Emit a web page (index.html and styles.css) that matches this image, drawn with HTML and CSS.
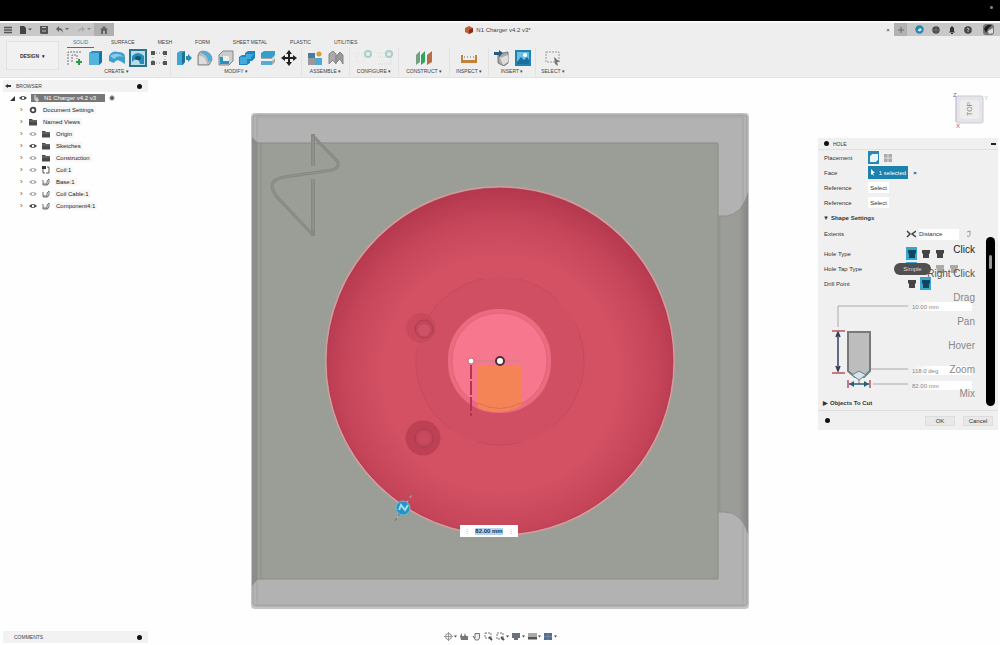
FILE: index.html
```html
<!DOCTYPE html>
<html lang="en">
<head>
<meta charset="utf-8">
<title>N1 Charger v4.2 v3*</title>
<link rel="stylesheet" href="styles.css">
</head>
<body>
<svg class="defs" width="0" height="0" aria-hidden="true">
  <defs>
    <symbol id="eye" viewBox="0 0 8 8"><path d="M0 4Q4 0 8 4Q4 8 0 4Z" fill="currentColor"/><circle cx="4" cy="4" r="1.2" fill="#fff"/></symbol>
    <symbol id="folder" viewBox="0 0 8 8"><path d="M0 1h3l1 1h4v5.500H0Z" fill="#4a4a4a"/><path d="M0 3h8" stroke="#999" stroke-width=".6"/></symbol>
    <symbol id="body" viewBox="0 0 8 8"><path d="M1 2v5h4.500l1.500-2V1L5 3v4M1 6h4" fill="#eee" stroke="#666" stroke-width=".9"/></symbol>
    <symbol id="gear" viewBox="0 0 8 8"><circle cx="4" cy="4" r="2.400" fill="none" stroke="#444" stroke-width="1.800"/></symbol>
    <symbol id="tap" viewBox="0 0 8 8"><path d="M0 0h8v3L7 4v4H1V4L0 3Z" fill="currentColor"/></symbol>
  </defs>
</svg>

<div class="screen-top"><span class="cam"></span></div>

<header class="app-head">
  <div class="titlebar">
    <div class="quick">
      <button aria-label="Data panel"><svg width="8" height="8" viewBox="0 0 8 8"><path d="M0 1.500h8M0 4h8M0 6.500h8" stroke="#555" stroke-width="1.400"/></svg></button>
      <button aria-label="File"><svg width="12" height="8" viewBox="0 0 12 8"><path d="M0 0h4l2 2v6H0Z" fill="#444"/><path d="M8 2.500h4l-2 2Z" fill="#555"/></svg></button>
      <button aria-label="Save"><svg width="8" height="8" viewBox="0 0 8 8"><path d="M0 0h8v8H1L0 7Z" fill="#555"/><path d="M2 1.500h4M2 5h4" stroke="#bbb"/></svg></button>
      <button aria-label="Undo"><svg width="14" height="8" viewBox="0 0 14 8"><path d="M0 3L3 0v2Q7 2 7 7Q6 4 3 4v2Z" fill="#666"/><path d="M9 2h4l-2 2Z" fill="#666"/></svg></button>
      <button aria-label="Redo"><svg width="14" height="8" viewBox="0 0 14 8"><path d="M7 3L4 0v2Q0 2 0 7Q1 4 4 4v2Z" fill="#aaa"/><path d="M9 2h4l-2 2Z" fill="#888"/></svg></button>
      <button class="home" aria-label="Home"><svg width="8" height="8" viewBox="0 0 8 8"><path d="M4 0L8 4H7v4H5V5H3v3H1V4H0Z" fill="#666"/></svg></button>
    </div>
    <div class="doc-title"><svg width="8" height="8" viewBox="0 0 8 8"><path d="M0 2L4 0L8 2V6L4 8L0 6Z" fill="#c75b35"/><path d="M4 4L8 2V6L4 8Z" fill="#733222"/></svg><span>N1 Charger v4.2 v3*</span></div>
    <button class="tab-close" aria-label="Close tab">×</button>
    <div class="account">
      <button class="new-tab" aria-label="New tab"><svg width="8" height="8" viewBox="0 0 8 8"><path d="M4 1v6M1 4h6" stroke="#666"/></svg></button>
      <button aria-label="Extensions"><svg width="9" height="9" viewBox="0 0 9 9"><circle cx="4.500" cy="4.500" r="4.200" fill="#2488b2"/><path d="M2.500 5.500L5 3l2 1.500-2 2Z" fill="#d5edf5"/></svg></button>
      <button aria-label="Job status"><svg width="8" height="8" viewBox="0 0 8 8"><circle cx="4" cy="4" r="3.700" fill="#4a4a4a"/><path d="M1 4h6M4 1v6" stroke="#888" stroke-width=".6"/></svg></button>
      <button aria-label="Notifications"><svg width="8" height="8" viewBox="0 0 8 8"><path d="M4 0L6 2v3l1 1.500H1L2 5V2ZM3 7h2v1H3Z" fill="#333"/></svg></button>
      <button aria-label="Help"><svg width="8" height="8" viewBox="0 0 8 8"><circle cx="4" cy="4" r="3.800" fill="#444"/><path d="M2.700 3Q4 1 5.200 3L4 4.500v1.500" fill="none" stroke="#ccc" stroke-width=".9"/></svg></button>
      <button class="avatar" aria-label="Profile"><svg width="11" height="11" viewBox="0 0 11 11"><rect width="11" height="11" rx="3" fill="#777"/><path d="M1 5Q3 0 9 1L5 5L3 9Z" fill="#222"/><path d="M5 7L10 4V9L6 10Z" fill="#ddd"/></svg></button>
    </div>
  </div>

  <div class="ribbon">
    <button class="workspace-btn">DESIGN <i>▾</i></button>
    <div class="ribbon-main">
      <nav class="tabs">
        <button class="active">SOLID</button><button>SURFACE</button><button>MESH</button><button>FORM</button><button>SHEET METAL</button><button>PLASTIC</button><button>UTILITIES</button>
      </nav>
      <div class="groups">
        <section class="group">
          <div class="tools">
            <button aria-label="Create sketch"><svg viewBox="0 0 16 16"><path d="M1 15V2h13M5 12V5h5v4" fill="none" stroke="#777" stroke-dasharray="2 1"/><path d="M12 9v6M9 12h6" stroke="#2c9a45" stroke-width="2"/></svg></button>
            <button aria-label="Extrude"><svg viewBox="0 0 16 16"><path d="M1 3L4 1H14V12L11 15H1Z" fill="#218fc1"/><path d="M1 3H11V15H1Z" fill="#52b4dd"/><path d="M11 3L14 1V12L11 15Z" fill="#1674a2"/></svg></button>
            <button aria-label="Revolve"><svg viewBox="0 0 16 16"><path d="M0 6Q3 0 9 2Q16 2 16 7V14L11 11Q7 9 5 13L0 11Z" fill="#3e9fcd"/><path d="M1 6Q8 1 15 7Q8 5 5 9Z" fill="#88cce8"/></svg></button>
            <button class="picked" aria-label="Hole"><svg viewBox="0 0 18 18"><path d="M1 1H17V17H1Z" fill="#b8dce8" stroke="#2b728d" stroke-width="2"/><path d="M3 7Q9 1 15 7V15H11Q10 9 5 11L3 13Z" fill="#258bb7"/><ellipse cx="9" cy="9" rx="3" ry="2" fill="#135872"/></svg></button>
            <button aria-label="Pattern"><svg viewBox="0 0 16 16"><path d="M2 3H14V13H2Z" fill="none" stroke="#888" stroke-dasharray="1 2"/><path d="M0 1h4v4H0ZM12 1h4v4h-4ZM0 11h4v4H0ZM12 11h4v4h-4Z" fill="#555"/></svg></button>
          </div>
          <button class="group-name">CREATE ▾</button>
        </section>
        <section class="group">
          <div class="tools">
            <button aria-label="Press pull"><svg viewBox="0 0 16 16"><path d="M1 3L4 1H9V12L7 15H1Z" fill="#3da8d5"/><path d="M6 3L9 1V12L6 15Z" fill="#216f93"/><path d="M10 6h2V4l4 4-4 4v-2h-2Z" fill="#2a8ab2"/></svg></button>
            <button aria-label="Fillet"><svg viewBox="0 0 16 16"><path d="M1 15V5Q2 1 6 1Q15 2 15 10L12 15Z" fill="#bbb" stroke="#888"/><path d="M6 1Q15 2 15 10L11 12Q11 5 4 3Z" fill="#4dafda"/><path d="M2 6Q8 5 10 14H2Z" fill="#ddd"/></svg></button>
            <button aria-label="Shell"><svg viewBox="0 0 16 16"><path d="M1 5L5 1H15V11L11 15H1Z" fill="#ccc" stroke="#888"/><path d="M2 7H11V14H2Z" fill="#2d91bd"/><path d="M5 6H11V11H5Z" fill="#eee"/></svg></button>
            <button aria-label="Combine"><svg viewBox="0 0 16 16"><path d="M0 7L3 5H6V3L9 1H16V8L13 11H11V13L8 15H0Z" fill="#1e86bd"/><path d="M1 7H7V4H15L12 7V9H8V14H1Z" fill="#43a9da"/></svg></button>
            <button aria-label="Split"><svg viewBox="0 0 16 16"><path d="M1 3L4 1H15V5L12 8H1Z" fill="#349fca"/><path d="M1 8H12L15 5V12L12 15H1Z" fill="#aaa"/><path d="M1 9H12L15 6V8L12 11H1Z" fill="#e5f3f9"/><path d="M1 11H12V15H1Z" fill="#55acd0"/></svg></button>
            <button aria-label="Move"><svg viewBox="0 0 16 16"><path d="M8 2V14M2 8H14" stroke="#222" stroke-width="2"/><path d="M8 0L11 4H5ZM8 16L5 12h6ZM0 8L4 5v6ZM16 8L12 11V5Z" fill="#222"/></svg></button>
          </div>
          <button class="group-name">MODIFY ▾</button>
        </section>
        <section class="group">
          <div class="tools">
            <button aria-label="New component"><svg viewBox="0 0 16 16"><path d="M1 3H8V8H1Z" fill="#477da4"/><path d="M1 8H8V15H1Z" fill="#999"/><path d="M8 8H15V15H8Z" fill="#4aaad8"/><circle cx="12" cy="4" r="2.500" fill="#d8a12d"/></svg></button>
            <button aria-label="Joint"><svg viewBox="0 0 16 16"><path d="M1 14V4L5 1L8 4V14L5 10Z" fill="#aaa" stroke="#888"/><path d="M8 6L12 2L15 5V14L12 9L8 13Z" fill="#999" stroke="#888"/></svg></button>
          </div>
          <button class="group-name">ASSEMBLE ▾</button>
        </section>
        <section class="group">
          <div class="tools faded">
            <button aria-label="Configuration"><svg viewBox="0 0 16 16"><path d="M1 3H8V12H1Z" fill="none" stroke="#ddd" stroke-dasharray="1 1"/><circle cx="12" cy="4" r="3" fill="none" stroke="#7cb9b5" stroke-width="2"/></svg></button>
            <button aria-label="Configuration table"><svg viewBox="0 0 16 16"><path d="M1 3H14V14H1M1 7H14" fill="none" stroke="#ccc" stroke-dasharray="1 1"/><circle cx="12" cy="4" r="3" fill="none" stroke="#7cb9b5" stroke-width="2"/></svg></button>
          </div>
          <button class="group-name">CONFIGURE ▾</button>
        </section>
        <section class="group">
          <div class="tools"><button aria-label="Offset plane"><svg viewBox="0 0 16 16"><path d="M0 5L4 1V12L0 15Z" fill="#78a080"/><path d="M5 5L9 1V12L5 15Z" fill="#2ca85c"/><path d="M11 5L16 1V12L11 15Z" fill="#b66e4a"/></svg></button></div>
          <button class="group-name">CONSTRUCT ▾</button>
        </section>
        <section class="group">
          <div class="tools"><button aria-label="Measure"><svg viewBox="0 0 16 16"><path d="M1 5V12H15V5M1 11H15" fill="none" stroke="#c3813b" stroke-width="2"/><path d="M3 7H13" stroke="#666" stroke-dasharray="1 2"/></svg></button></div>
          <button class="group-name">INSPECT ▾</button>
        </section>
        <section class="group">
          <div class="tools">
            <button aria-label="Insert component"><svg viewBox="0 0 16 16"><path d="M4 4L14 2V13L10 16L4 13Z" fill="#aaa" stroke="#777"/><path d="M6 8L14 5V12L9 15Z" fill="#ddd"/><path d="M0 2H5V0L9 3L5 7V5H0Z" fill="#235d86"/></svg></button>
            <button aria-label="Decal"><svg viewBox="0 0 16 16"><path d="M1 1H15V15H1Z" fill="#6bbfe3" stroke="#2381b1" stroke-width="2"/><path d="M2 12L6 7L9 10L12 7L14 10V14H2Z" fill="#176f9f"/><circle cx="10" cy="5" r="2" fill="#fff"/></svg></button>
          </div>
          <button class="group-name">INSERT ▾</button>
        </section>
        <section class="group">
          <div class="tools"><button aria-label="Select"><svg viewBox="0 0 16 16"><path d="M1 2H14V12H1Z" fill="none" stroke="#999" stroke-dasharray="2 1"/><path d="M9 7L15 12L12 12L13 16L10 14Z" fill="#777"/></svg></button></div>
          <button class="group-name">SELECT ▾</button>
        </section>
      </div>
    </div>
  </div>
</header>

<main class="workspace">
  <aside class="left">
    <section class="browser">
      <h2 class="bar"><svg width="6" height="6" viewBox="0 0 6 6"><path d="M0 3L3 1V5ZM3 2H6V4H3Z" fill="#333"/></svg><span>BROWSER</span><i class="dot"></i></h2>
      <div class="root"><svg width="5" height="5" viewBox="0 0 5 5"><path d="M5 0V5H0Z" fill="#333"/></svg><svg class="ico"><use href="#eye"/></svg><span class="root-name"><svg width="6" height="7" viewBox="0 0 6 7"><path d="M1 0V5H5M3 2V7" fill="none" stroke="#eee"/></svg>N1 Charger v4.2 v3</span><svg width="6" height="6" viewBox="0 0 6 6"><circle cx="3" cy="3" r="2.200" fill="#555" stroke="#aaa"/></svg></div>
      <ul class="tree">
        <li><i>›</i><svg class="ico"><use href="#gear"/></svg><span>Document Settings</span></li>
        <li><i>›</i><svg class="ico"><use href="#folder"/></svg><span>Named Views</span></li>
        <li><i>›</i><svg class="ico off"><use href="#eye"/></svg><svg class="ico"><use href="#folder"/></svg><span>Origin</span></li>
        <li><i>›</i><svg class="ico"><use href="#eye"/></svg><svg class="ico"><use href="#folder"/></svg><span>Sketches</span></li>
        <li><i>›</i><svg class="ico off"><use href="#eye"/></svg><svg class="ico"><use href="#folder"/></svg><span>Construction</span></li>
        <li><i>›</i><svg class="ico off"><use href="#eye"/></svg><svg class="ico" viewBox="0 0 8 8"><path d="M0 0H4V3H0Z" fill="#333"/><path d="M1 3V7H3M5 1H7V7H4" fill="none" stroke="#555"/></svg><span>Coil:1</span></li>
        <li><i>›</i><svg class="ico off"><use href="#eye"/></svg><svg class="ico"><use href="#body"/></svg><span>Base:1</span></li>
        <li><i>›</i><svg class="ico off"><use href="#eye"/></svg><svg class="ico"><use href="#body"/></svg><span>Coil Cable:1</span></li>
        <li><i>›</i><svg class="ico"><use href="#eye"/></svg><svg class="ico"><use href="#body"/></svg><span>Component4:1</span></li>
      </ul>
    </section>
    <h2 class="bar comments"><span>COMMENTS</span><i class="dot"></i></h2>
  </aside>

  <section class="stage">
    <div class="model">
      <svg viewBox="250 112 500 498" role="img" aria-label="Charger body seen from above">
        <defs>
          <radialGradient id="disc" gradientUnits="userSpaceOnUse" cx="500" cy="374" r="188">
            <stop offset="0" stop-color="#d35163"/><stop offset=".62" stop-color="#d35163"/><stop offset=".8" stop-color="#c9475b"/><stop offset="1" stop-color="#b2374d"/>
          </radialGradient>
          <linearGradient id="chan" x1="0" x2="1"><stop offset="0" stop-color="#92948f"/><stop offset=".15" stop-color="#9c9e98"/><stop offset=".7" stop-color="#9b9c98"/><stop offset="1" stop-color="#858786"/></linearGradient>
        </defs>
        <rect x="251" y="113" width="498" height="496" rx="4" fill="#c4c4c4"/>
        <rect x="253" y="115" width="494" height="491" rx="3" fill="#b3b3b3" stroke="#9d9d9d"/>
        <path d="M257 117H743V605H257Z" fill="#b2b2b2" stroke="#a3a3a3"/>
        <path d="M252 137L258 143V579L252 586Z" fill="#8b8d8a"/>
        <path d="M257 143H718V579H257Z" fill="#9b9d97" stroke="#898b87"/>
        <path d="M261 143V579" stroke="#8b8d89"/>
        <path d="M718 216H727Q742 214 748 193V533Q741 512 725 512H718Z" fill="url(#chan)"/>
        <path d="M718 216H727Q742 214 748 193M748 533Q741 512 725 512H718" fill="none" stroke="#8f908d"/>
        <path d="M719 217V511M743 207V519" stroke="#8f918e"/>
        <path d="M314 137L337 161Q341 167 332 170L285 177Q264 180 277 197L313 235" fill="none" stroke="#858783" stroke-width="3"/>
        <path d="M314 137L337 161Q341 167 332 170L285 177Q264 180 277 197L313 235" fill="none" stroke="#93958f"/>
        <path d="M313 134V166M313 179V236" stroke="#868884" stroke-width="4"/>
        <path d="M313 136V166M313 179V230" stroke="#8e908b" stroke-width="2"/>
        <circle cx="500" cy="361" r="174" fill="url(#disc)" stroke="#d59a9b" stroke-width="2"/>
        <circle cx="500" cy="361" r="173" fill="none" stroke="#a83449" stroke-opacity=".7"/>
        <circle cx="500" cy="361" r="84" fill="#ca485e" fill-opacity=".15" stroke="#b94458" stroke-opacity=".5" stroke-dasharray="75 35 45 30 90 28"/>
        <circle cx="421" cy="328" r="15" fill="#bf4156" fill-opacity=".4"/>
        <circle cx="424" cy="329" r="9" fill="#c3465b" stroke="#ac3d50"/>
        <circle cx="424" cy="330" r="6" fill="#cd5366"/>
        <circle cx="423" cy="438" r="17.500" fill="#bd4055"/>
        <circle cx="424" cy="438" r="9" fill="#c2465a" stroke="#a93a4e"/>
        <circle cx="424" cy="438" r="6" fill="#c9495f"/>
        <rect x="448" y="309" width="103" height="104" rx="50" fill="#ed6b80"/>
        <rect x="452" y="313" width="95" height="96" rx="47" fill="#f7778f" stroke="#df6579"/>
        <path d="M478 365H521V406Q500 417 478 408Z" fill="#f48456"/>
        <path d="M478 403Q500 414 521 403" fill="none" stroke="#dc7052"/>
        <path d="M471 361H522" stroke="#ba8d86"/>
        <path d="M471 365V416" stroke="#b73354" stroke-width="2" stroke-dasharray="14 2"/>
        <circle cx="471" cy="361" r="3" fill="#fff" stroke="#b6737c"/>
        <circle cx="500" cy="361" r="4" fill="#fff" stroke="#4d3038" stroke-width="2"/>
        <path d="M413 493L395 521" stroke="#bbb"/><path d="M413 493L395 521" stroke="#555" stroke-dasharray="3 3"/>
        <circle cx="403" cy="508" r="7" fill="#2594c2" stroke="#67bddb"/>
        <path d="M399 510L401 505L405 510L408 505" fill="none" stroke="#a8dcee" stroke-width="2"/>
      </svg>
      <label class="dimension"><i>⋮</i><input aria-label="Diameter" value="82.00 mm"><i>⋮</i></label>
    </div>
    <nav class="view-tools">
      <button aria-label="Orbit"><svg width="13" height="9" viewBox="0 0 13 9"><circle cx="4.500" cy="4.500" r="3" fill="none" stroke="#888"/><path d="M4.500 0V9M0 4.500H9" stroke="#999"/><path d="M10 3.500h3l-1.500 2Z" fill="#444"/></svg></button>
      <button aria-label="Look at"><svg width="9" height="9" viewBox="0 0 9 9"><path d="M0 4L2 1V4H4L5 1L6 4H8V8H1Z" fill="#777"/></svg></button>
      <button aria-label="Pan"><svg width="9" height="9" viewBox="0 0 9 9"><path d="M1 4L3 6V1.500H7.500V6L6 8H3.500Z" fill="#eee" stroke="#777"/></svg></button>
      <button aria-label="Zoom"><svg width="9" height="9" viewBox="0 0 9 9"><path d="M1 1H7V6H1Z" fill="none" stroke="#777" stroke-dasharray="2 1"/><path d="M5 5L8 8" stroke="#555" stroke-width="2"/></svg></button>
      <button aria-label="Fit"><svg width="13" height="9" viewBox="0 0 13 9"><path d="M1 1H7V7H1Z" fill="none" stroke="#777" stroke-dasharray="2 1"/><path d="M5 5L8 8" stroke="#555" stroke-width="2"/><path d="M10 3.500h3l-1.500 2Z" fill="#444"/></svg></button>
      <button aria-label="Display settings"><svg width="13" height="9" viewBox="0 0 13 9"><path d="M0 1H8V6H6V8H2V6H0Z" fill="#6b7178"/><path d="M10 3.500h3l-1.500 2Z" fill="#444"/></svg></button>
      <button aria-label="Grid"><svg width="13" height="9" viewBox="0 0 13 9"><path d="M0 1H9V8H0Z" fill="#aaa"/><path d="M0 5H9V7H0Z" fill="#555"/><path d="M10 3.500h3l-1.500 2Z" fill="#444"/></svg></button>
      <button aria-label="Viewports"><svg width="13" height="9" viewBox="0 0 13 9"><path d="M0 1H8V8H0Z" fill="#526f91"/><path d="M0 4.500H8M4 1V8" stroke="#8aa0b8" stroke-width=".5"/><path d="M10 3.500h3l-1.500 2Z" fill="#444"/></svg></button>
    </nav>
  </section>

  <aside class="right">
    <svg class="cube" width="38" height="40" viewBox="0 0 38 40" aria-label="View cube">
      <rect x="5" y="6" width="27" height="27" rx="2" fill="#e5e5e9" stroke="#c9c9d0"/><rect x="9" y="10" width="19" height="19" rx="3" fill="#eee"/>
      <text class="cube-face" transform="translate(21 26) rotate(-90)">TOP</text><text class="axis z" x="2" y="7">Z</text><text class="axis x" x="5" y="38">X</text><text class="axis y" x="33" y="10">Y</text>
      <path d="M5 7V32" stroke="#c9c2dc"/>
    </svg>
    <form class="hole">
      <h2 class="hole-head"><i class="dot"></i><span>HOLE</span><i class="minus"></i></h2>
      <div class="fields">
        <div class="row"><span>Placement</span><div class="ctl"><button type="button" class="tile on" aria-label="Single hole"><svg width="7" height="7" viewBox="0 0 7 7"><path d="M0 2L2 0H7V5L5 7H0Z" fill="#e5f6fb"/></svg></button><button type="button" class="tile" aria-label="Multiple holes"><svg width="8" height="8" viewBox="0 0 8 8"><path d="M0 0H8V8H0Z" fill="#aaa"/><path d="M0 4H8M4 0V8" stroke="#ddd"/></svg></button></div></div>
        <div class="row"><span>Face</span><div class="ctl"><button type="button" class="selected"><svg width="6" height="7" viewBox="0 0 6 7"><path d="M1 0L5 4H3L4 7L2 5L1 6Z" fill="#fff"/></svg>1 selected</button><button type="button" class="clear" aria-label="Clear">×</button></div></div>
        <div class="row"><span>Reference</span><div class="ctl"><button type="button" class="pick">Select</button></div></div>
        <div class="row"><span>Reference</span><div class="ctl"><button type="button" class="pick">Select</button></div></div>
      </div>
      <h3 class="fold">▼ <span>Shape Settings</span></h3>
      <div class="fields shape">
        <div class="row extents"><label for="ext">Extents</label><div class="ctl"><svg width="10" height="8" viewBox="0 0 10 8"><path d="M1 1L4 4L1 7M10 1L6 4L10 7" fill="none" stroke="#444" stroke-width="1.500"/></svg><select id="ext"><option>Distance</option></select><svg width="6" height="8" viewBox="0 0 6 8"><path d="M1 2L4 1V5Q3 8 1 6" fill="none" stroke="#999"/></svg></div></div>
        <div class="row"><span>Hole Type</span><div class="ctl"><button type="button" class="tile on" aria-label="Simple"><svg><use href="#tap"/></svg></button><button type="button" class="tile" aria-label="Counterbore"><svg><use href="#tap"/></svg></button><button type="button" class="tile" aria-label="Countersink"><svg><use href="#tap"/></svg></button></div></div>
        <div class="row"><span>Hole Tap Type</span><div class="ctl"><button type="button" class="tile on" aria-label="Simple tap"><svg><use href="#tap"/></svg></button><button type="button" class="tile" aria-label="Clearance"><svg><use href="#tap"/></svg></button><button type="button" class="tile dim" aria-label="Tapped"><svg><use href="#tap"/></svg></button><button type="button" class="tile dim" aria-label="Taper tapped"><svg><use href="#tap"/></svg></button></div><span class="tip">Simple</span></div>
        <div class="row"><span>Drill Point</span><div class="ctl"><button type="button" class="tile" aria-label="Flat"><svg><use href="#tap"/></svg></button><button type="button" class="tile on" aria-label="Angle"><svg><use href="#tap"/></svg></button></div></div>
      </div>
      <div class="drill">
        <svg width="84" height="96" viewBox="0 0 84 96" aria-label="Hole dimensions">
          <path d="M14 30V9H84M46 72H84M49 87H84" fill="none" stroke="#aaa"/>
          <path d="M24 35H46V74L40 80H31L24 74Z" fill="#bdbdbd" stroke="#77797c" stroke-width="2"/>
          <path d="M28 78L35 74L42 78L35 83ZM42 78L47 73M35 83V87" fill="#d8e3e9" stroke="#668293"/>
          <path d="M14 35V74M12 40L14 35L16 40M12 69L14 74L16 69" fill="none" stroke="#333f5c" stroke-width="1.500"/>
          <path d="M25 87H45" stroke="#286078" stroke-width="1.500"/><path d="M30 84V90L25 87ZM40 84V90L45 87Z" fill="#286078"/>
          <path d="M8 34H21M8 76H21M24 83V91M46 83V91" stroke="#bd5064" stroke-width="1.500"/>
        </svg>
        <div class="values"><input aria-label="Depth" value="10.00 mm"><input aria-label="Tip angle" value="118.0 deg"><input aria-label="Hole diameter" value="82.00 mm"></div>
      </div>
      <h3 class="fold objects">▶ <span>Objects To Cut</span></h3>
      <footer class="hole-foot"><i class="dot"></i><button type="button">OK</button><button type="button">Cancel</button></footer>
      <div class="keys"><ul><li>Click</li><li>Right Click</li><li>Drag</li><li>Pan</li><li>Hover</li><li>Zoom</li><li>Mix</li></ul><div class="key-bar"><i></i></div></div>
    </form>
  </aside>
</main>
</body>
</html>
```
FILE: styles.css
```css
* { box-sizing: border-box; }
body {
  margin: 0;
  min-height: 100vh;
  display: flex;
  flex-direction: column;
  background: #fefefe;
  color: #444;
  font: 6px/8px "Liberation Sans", Arial, sans-serif;
}
button, input, select {
  margin: 0;
  padding: 0;
  border: 0;
  background: none;
  color: inherit;
  font: inherit;
}
button { display: flex; align-items: center; justify-content: center; }
h2, h3, ul { margin: 0; padding: 0; font: inherit; list-style: none; }
i { font-style: normal; }
svg { display: block; flex: none; }
.defs { position: absolute; }
.dot { width: 5px; height: 5px; border-radius: 50%; background: #111; }

.screen-top { height: 21px; background: #000; display: flex; justify-content: flex-end; padding: 6px 7px; }
.cam { width: 3px; height: 3px; border-radius: 50%; background: #888; }

/* Title bar */
.app-head { background: #eeeeee; border-top: 2px solid #fbfbfb; border-bottom: 1px solid #e2e2e2; }
.titlebar { display: flex; height: 13px; }
.quick, .account { display: flex; background: #c8c8c8; align-items: stretch; }
.quick { padding-left: 4px; gap: 8px; }
.quick .home { width: 20px; margin-left: -6px; background: #b0b0b0; }
.doc-title { flex: 1; display: flex; align-items: center; justify-content: center; gap: 3px; }
.tab-close { width: 12px; color: #333; }
.account { gap: 8px; padding-right: 6px; }
.account .new-tab { width: 13px; background: #b2b2b2; }
.account .avatar { margin-left: 3px; }

/* Ribbon */
.ribbon { display: flex; height: 41px; padding-left: 6px; }
.workspace-btn { width: 53px; height: 29px; margin-top: 5px; gap: 3px; border: 1px solid #e2e2e2; background: #f1f1f1; font-size: 5px; font-weight: bold; color: #333; }
.ribbon-main { padding-left: 4px; }
.tabs { display: flex; gap: 23px; height: 12px; font-size: 5px; }
.tabs button { height: 12px; }
.tabs .active { padding: 0 6px; margin: 0 -6px 0 4px; color: #1d82ab; border-bottom: 1px solid #1d82ab; }
.groups { display: grid; grid-template-columns: 108px 131px 48px 49px 51px 39px 47px 34px; height: 28px; }
.group { display: flex; flex-direction: column; align-items: center; border-right: 1px solid #e2e2e2; }
.group:last-child { border: 0; }
.tools { display: flex; gap: 5px; height: 19px; align-items: center; }
.tools svg { width: 16px; height: 16px; }
.tools .picked svg { width: 18px; height: 18px; margin: 0 -1px; }
.faded { opacity: .6; }
.group-name { height: 8px; font-size: 5px; white-space: nowrap; }

/* Workspace */
.workspace { flex: 1; display: grid; grid-template-columns: 250px minmax(0, 1fr) 250px; }
.left { display: flex; flex-direction: column; justify-content: space-between; padding: 2px 0 2px 3px; }
.bar { width: 145px; height: 12px; display: flex; align-items: center; gap: 5px; padding: 0 6px 0 2px; background: #f2f2f2; font-size: 5px; }
.bar .dot { margin-left: auto; }
.comments { padding-left: 11px; }
.root { display: flex; align-items: center; gap: 4px; height: 12px; padding-left: 7px; }
.root-name { display: flex; align-items: center; gap: 4px; width: 74px; height: 8px; padding-left: 3px; background: #777; color: #fff; white-space: nowrap; }
.ico { width: 8px; height: 8px; color: #444; }
.off { color: #aaa; }
.tree { padding-left: 17px; }
.tree li { display: flex; align-items: center; gap: 5px; height: 12px; color: #222; }
.tree i { width: 4px; font-size: 8px; color: #555; }
.tree span { padding: 0 2px 0 1px; background: #f7f7f7; }

.stage { display: flex; flex-direction: column; justify-content: space-between; align-items: center; padding: 34px 0 4px; }
.model { position: relative; width: 100%; }
.model > svg { width: 100%; height: auto; }
.dimension { position: absolute; left: 42%; top: 83%; width: 58px; height: 12px; display: flex; align-items: center; justify-content: space-between; padding: 0 4px; background: #fff; }
.dimension i { color: #999; }
.dimension input { width: 28px; height: 7px; background: #b6d3ec; color: #12355c; font-weight: bold; text-align: center; }
.view-tools { display: flex; gap: 3px; }

/* Right side */
.right { display: flex; flex-direction: column; align-items: flex-end; padding: 12px 2px 0 0; }
.cube { margin: 0 9px 8px 0; }
.cube-face { font-size: 7px; fill: #888; }
.axis { font-size: 6px; }
.z { fill: #7560b0; }
.x { fill: #c05070; }
.y { fill: #92d6b4; }
.hole { position: relative; width: 180px; background: #f0f0f0; color: #333; }
.hole-head { display: flex; align-items: center; gap: 4px; height: 12px; padding: 0 2px 0 6px; border-bottom: 1px solid #e0e0e0; font-size: 5px; }
.minus { width: 5px; height: 2px; margin-left: auto; background: #222; }
.fields { padding-left: 6px; }
.row { position: relative; display: grid; grid-template-columns: 44px 1fr; align-items: center; height: 15px; }
.ctl { display: flex; align-items: center; gap: 3px; }
.tile { width: 11px; height: 13px; color: #444; }
.tile svg { width: 8px; height: 8px; }
.on { background: #2589b1; color: #12465e; }
.selected { width: 40px; height: 13px; gap: 3px; background: #1d81ae; color: #fff; }
.clear { width: 8px; font-weight: bold; }
.pick { width: 21px; height: 11px; background: #fff; }
.fold { display: flex; align-items: center; gap: 2px; height: 15px; padding-left: 5px; font-size: 6px; font-weight: bold; }
.shape .row { grid-template-columns: 82px 1fr; }
.shape .extents { height: 18px; margin-bottom: 3px; }
.extents select { appearance: none; width: 40px; height: 11px; background: #fff; }
.extents svg:last-child { margin-left: 4px; }
.shape .on { background: #38a7cb; }
.dim { opacity: .4; }
.tip { position: absolute; left: 70px; top: 2px; width: 37px; height: 12px; border-radius: 6px; background: #505050; color: #ddd; line-height: 12px; text-align: center; }
.drill { display: grid; grid-template-columns: 84px 1fr; margin: 6px 0 0 6px; height: 98px; }
.values { display: grid; grid-template-rows: 19px 1fr 15px 15px; align-items: center; padding-bottom: 2px; }
.values input { width: 64px; height: 9px; padding-left: 4px; background: linear-gradient(90deg, #eee, #fff 40%); color: #888; }
.values input:first-child { grid-row: 1; }
.values input:nth-child(2) { grid-row: 3; }
.values input:nth-child(3) { grid-row: 4; }
.hole-foot { display: flex; align-items: center; gap: 8px; height: 20px; padding: 0 5px 0 7px; border-top: 1px solid #dedede; }
.hole-foot .dot { margin-right: auto; }
.hole-foot button { width: 30px; height: 10px; border: 1px solid #ddd; background: #e8e8e8; }
.keys { position: absolute; right: 3px; top: 99px; display: flex; gap: 11px; pointer-events: none; }
.keys ul { padding-top: 1px; text-align: right; font-size: 10px; line-height: 24px; color: #888; }
.keys li:first-child { color: #222; }
.keys li:nth-child(2) { color: #555; }
.key-bar { width: 9px; border-radius: 5px; background: #000; padding: 18px 3px; }
.key-bar i { display: block; height: 14px; border-radius: 2px; background: #999; }
```
